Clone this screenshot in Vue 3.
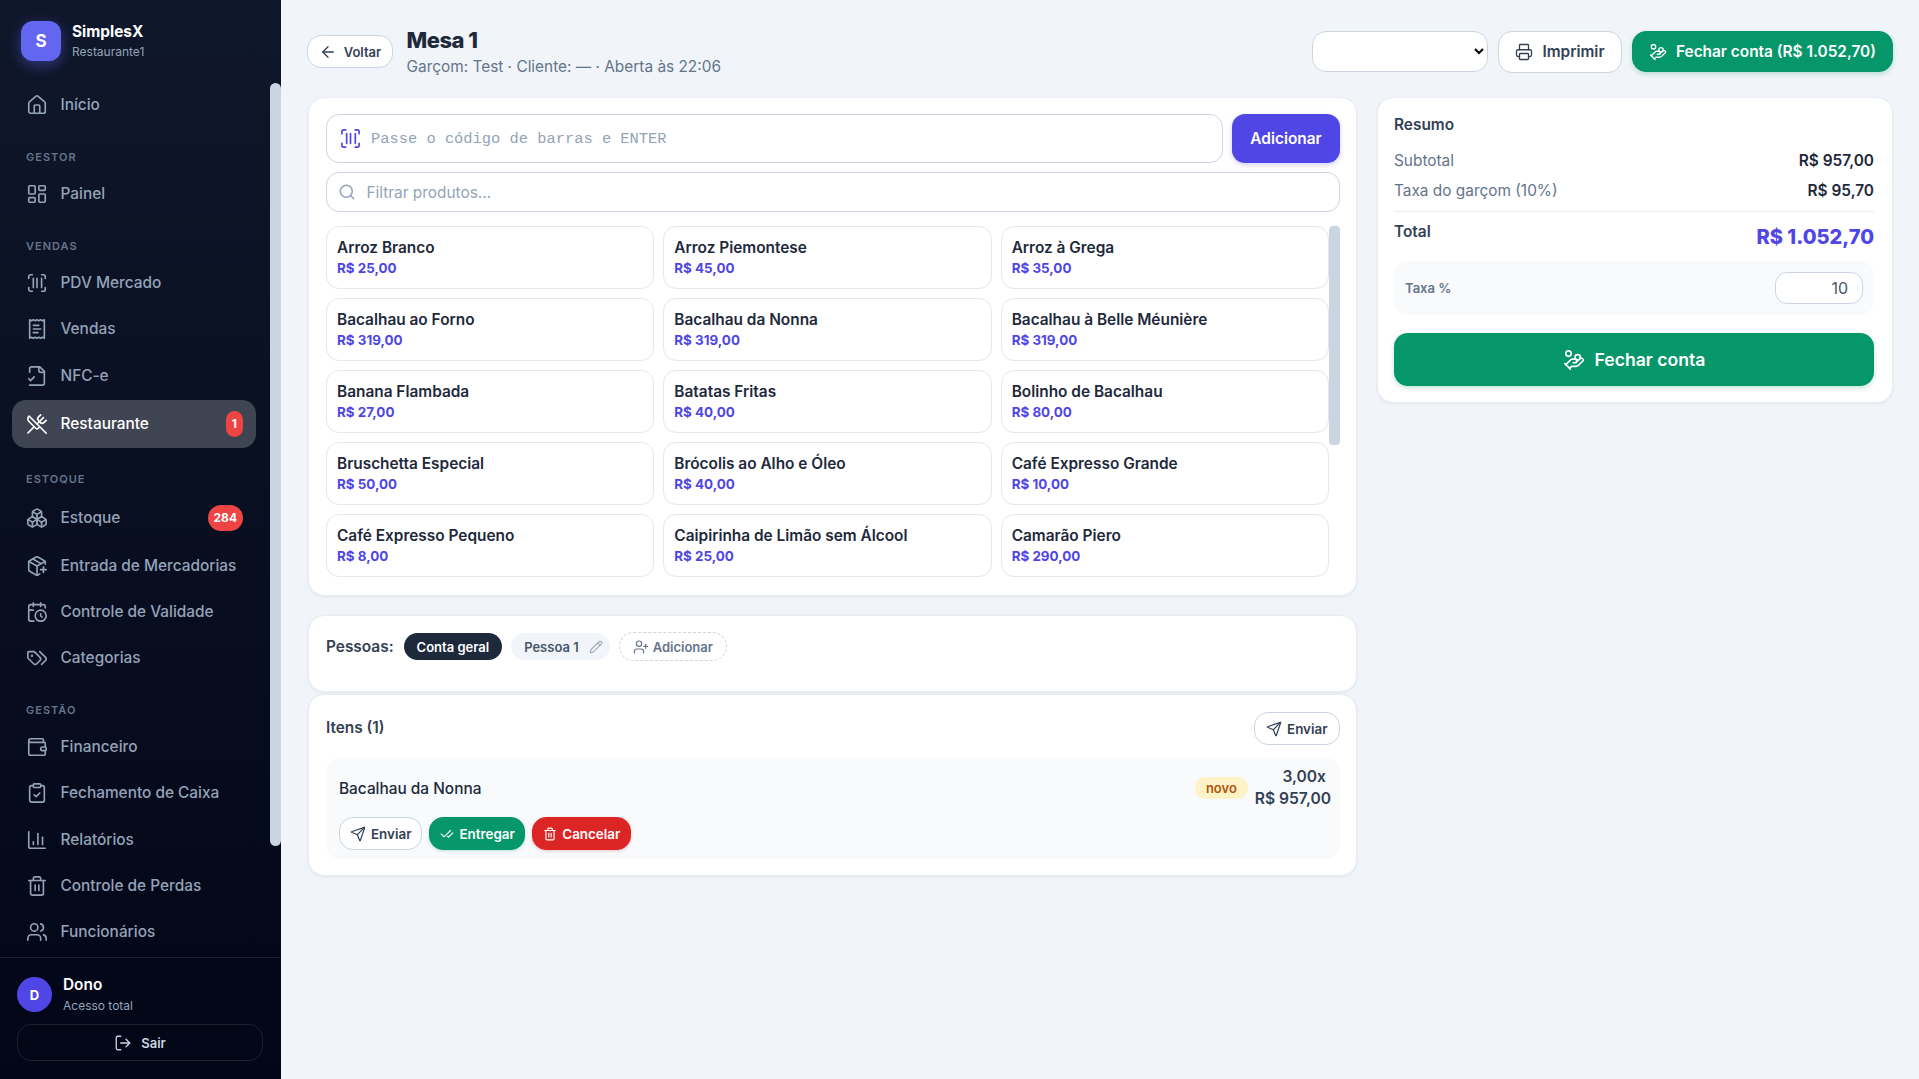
<script setup>
// ícones (traços estilo lucide)
const icons = {
  home: '<path d="M15 21v-8a1 1 0 0 0-1-1h-4a1 1 0 0 0-1 1v8"/><path d="M3 10a2 2 0 0 1 .709-1.528l7-5.999a2 2 0 0 1 2.582 0l7 5.999A2 2 0 0 1 21 10v9a2 2 0 0 1-2 2H5a2 2 0 0 1-2-2z"/>',
  dashboard: '<rect x="3" y="3" width="7" height="9" rx="1"/><rect x="14" y="3" width="7" height="5" rx="1"/><rect x="14" y="12" width="7" height="9" rx="1"/><rect x="3" y="16" width="7" height="5" rx="1"/>',
  barcode: '<path d="M3 7V5a2 2 0 0 1 2-2h2"/><path d="M17 3h2a2 2 0 0 1 2 2v2"/><path d="M21 17v2a2 2 0 0 1-2 2h-2"/><path d="M7 21H5a2 2 0 0 1-2-2v-2"/><path d="M8 7v10"/><path d="M12 7v10"/><path d="M17 7v10"/>',
  receipt: '<path d="M4 2v20l2-1 2 1 2-1 2 1 2-1 2 1 2-1 2 1V2l-2 1-2-1-2 1-2-1-2 1-2-1-2 1Z"/><path d="M14 8H8"/><path d="M16 12H8"/><path d="M13 16H8"/>',
  fileCheck: '<path d="M4 22h14a2 2 0 0 0 2-2V7l-5-5H6a2 2 0 0 0-2 2v4"/><path d="M14 2v4a2 2 0 0 0 2 2h4"/><path d="m3 15 2 2 4-4"/>',
  utensils: '<path d="m16 2-2.3 2.3a3 3 0 0 0 0 4.2l1.8 1.8a3 3 0 0 0 4.2 0L22 8"/><path d="M15 15 3.3 3.3a4.2 4.2 0 0 0 0 6l7.3 7.3c.7.7 2 .7 2.8 0L15 15Zm0 0 7 7"/><path d="m2.1 21.8 6.4-6.3"/><path d="m19 5-7 7"/>',
  boxes: '<path d="M2.97 12.92A2 2 0 0 0 2 14.63v3.24a2 2 0 0 0 .97 1.71l3 1.8a2 2 0 0 0 2.06 0L12 19v-5.5l-5-3-4.03 2.42Z"/><path d="m7 16.5-4.74-2.85"/><path d="m7 16.5 5-3"/><path d="M7 16.5v5.17"/><path d="M12 13.5V19l3.97 2.38a2 2 0 0 0 2.06 0l3-1.8a2 2 0 0 0 .97-1.71v-3.24a2 2 0 0 0-.97-1.71L17 10.5l-5 3Z"/><path d="m17 16.5-5-3"/><path d="m17 16.5 4.74-2.85"/><path d="M17 16.5v5.17"/><path d="M7.97 4.42A2 2 0 0 0 7 6.13v4.37l5 3 5-3V6.13a2 2 0 0 0-.97-1.71l-3-1.8a2 2 0 0 0-2.06 0l-3 1.8Z"/><path d="M12 8 7.26 5.15"/><path d="m12 8 4.74-2.85"/><path d="M12 13.5V8"/>',
  packagePlus: '<path d="M16 16h6"/><path d="M19 13v6"/><path d="M21 10V8a2 2 0 0 0-1-1.73l-7-4a2 2 0 0 0-2 0l-7 4A2 2 0 0 0 3 8v8a2 2 0 0 0 1 1.73l7 4a2 2 0 0 0 2 0l2-1.14"/><path d="m7.5 4.27 9 5.15"/><polyline points="3.29 7 12 12 20.71 7"/><line x1="12" x2="12" y1="22" y2="12"/>',
  calendarClock: '<path d="M21 7.5V6a2 2 0 0 0-2-2H5a2 2 0 0 0-2 2v14a2 2 0 0 0 2 2h3.5"/><path d="M16 2v4"/><path d="M8 2v4"/><path d="M3 10h5"/><path d="M17.5 17.5 16 16.3V14"/><circle cx="16" cy="16" r="6"/>',
  tags: '<path d="m15 5 6.3 6.3a2.4 2.4 0 0 1 0 3.4L17 19"/><path d="M9.586 5.586A2 2 0 0 0 8.172 5H3a1 1 0 0 0-1 1v5.172a2 2 0 0 0 .586 1.414L8.29 18.29a2.426 2.426 0 0 0 3.42 0l3.58-3.58a2.426 2.426 0 0 0 0-3.42z"/><circle cx="6.5" cy="9.5" r=".5" fill="currentColor"/>',
  wallet: '<path d="M19 7V4a1 1 0 0 0-1-1H5a2 2 0 0 0 0 4h15a1 1 0 0 1 1 1v4h-3a2 2 0 0 0 0 4h3a1 1 0 0 0 1-1v-2a1 1 0 0 0-1-1"/><path d="M3 5v14a2 2 0 0 0 2 2h15a1 1 0 0 0 1-1v-4"/>',
  clipboard: '<rect width="8" height="4" x="8" y="2" rx="1"/><path d="M16 4h2a2 2 0 0 1 2 2v14a2 2 0 0 1-2 2H6a2 2 0 0 1-2-2V6a2 2 0 0 1 2-2h2"/><path d="m9 14 2 2 4-4"/>',
  chart: '<path d="M3 3v16a2 2 0 0 0 2 2h16"/><path d="M18 17V9"/><path d="M13 17V5"/><path d="M8 17v-3"/>',
  trash: '<path d="M3 6h18"/><path d="M19 6v14c0 1-1 2-2 2H7c-1 0-2-1-2-2V6"/><path d="M8 6V4c0-1 1-2 2-2h4c1 0 2 1 2 2v2"/><line x1="10" x2="10" y1="11" y2="17"/><line x1="14" x2="14" y1="11" y2="17"/>',
  users: '<path d="M16 21v-2a4 4 0 0 0-4-4H6a4 4 0 0 0-4 4v2"/><circle cx="9" cy="7" r="4"/><path d="M22 21v-2a4 4 0 0 0-3-3.87"/><path d="M16 3.13a4 4 0 0 1 0 7.75"/>',
  logout: '<path d="M9 21H5a2 2 0 0 1-2-2V5a2 2 0 0 1 2-2h4"/><polyline points="16 17 21 12 16 7"/><line x1="21" x2="9" y1="12" y2="12"/>',
  arrowLeft: '<path d="m12 19-7-7 7-7"/><path d="M19 12H5"/>',
  printer: '<path d="M6 18H4a2 2 0 0 1-2-2v-5a2 2 0 0 1 2-2h16a2 2 0 0 1 2 2v5a2 2 0 0 1-2 2h-2"/><path d="M6 9V3a1 1 0 0 1 1-1h10a1 1 0 0 1 1 1v6"/><rect x="6" y="14" width="12" height="8" rx="1"/>',
  handCoins: '<path d="M11 15h2a2 2 0 1 0 0-4h-3c-.6 0-1.1.2-1.4.6L3 17"/><path d="m7 21 1.6-1.4c.3-.4.8-.6 1.4-.6h4c1.1 0 2.1-.4 2.8-1.2l4.6-4.4a2 2 0 0 0-2.75-2.91l-4.2 3.9"/><path d="m2 16 6 6"/><circle cx="16" cy="9" r="2.9"/><circle cx="6" cy="5" r="3"/>',
  search: '<path d="m21 21-4.34-4.34"/><circle cx="11" cy="11" r="8"/>',
  send: '<path d="M14.536 21.686a.5.5 0 0 0 .937-.024l6.5-19a.496.496 0 0 0-.635-.635l-19 6.5a.5.5 0 0 0-.024.937l7.93 3.18a2 2 0 0 1 1.112 1.11z"/><path d="m21.854 2.147-10.94 10.939"/>',
  checkCheck: '<path d="M18 6 7 17l-5-5"/><path d="m22 10-7.5 7.5L13 16"/>',
  userPlus: '<path d="M16 21v-2a4 4 0 0 0-4-4H6a4 4 0 0 0-4 4v2"/><circle cx="9" cy="7" r="4"/><line x1="19" x2="19" y1="8" y2="14"/><line x1="22" x2="16" y1="11" y2="11"/>',
  pencil: '<path d="M21.174 6.812a1 1 0 0 0-3.986-3.987L3.842 16.174a2 2 0 0 0-.5.83l-1.321 4.352a.5.5 0 0 0 .623.622l4.353-1.32a2 2 0 0 0 .83-.497z"/><path d="m15 5 4 4"/>',
};

// menu lateral
const menu = [
  { items: [{ label: 'Início', icon: 'home' }] },
  { title: 'GESTOR', items: [{ label: 'Painel', icon: 'dashboard' }] },
  {
    title: 'VENDAS',
    items: [
      { label: 'PDV Mercado', icon: 'barcode' },
      { label: 'Vendas', icon: 'receipt' },
      { label: 'NFC-e', icon: 'fileCheck' },
      { label: 'Restaurante', icon: 'utensils', badge: '1', active: true },
    ],
  },
  {
    title: 'ESTOQUE',
    items: [
      { label: 'Estoque', icon: 'boxes', badge: '284' },
      { label: 'Entrada de Mercadorias', icon: 'packagePlus' },
      { label: 'Controle de Validade', icon: 'calendarClock' },
      { label: 'Categorias', icon: 'tags' },
    ],
  },
  {
    title: 'GESTÃO',
    items: [
      { label: 'Financeiro', icon: 'wallet' },
      { label: 'Fechamento de Caixa', icon: 'clipboard' },
      { label: 'Relatórios', icon: 'chart' },
      { label: 'Controle de Perdas', icon: 'trash' },
      { label: 'Funcionários', icon: 'users' },
    ],
  },
];

// produtos
const products = [
  ['Arroz Branco', '25,00'], ['Arroz Piemontese', '45,00'], ['Arroz à Grega', '35,00'],
  ['Bacalhau ao Forno', '319,00'], ['Bacalhau da Nonna', '319,00'], ['Bacalhau à Belle Méunière', '319,00'],
  ['Banana Flambada', '27,00'], ['Batatas Fritas', '40,00'], ['Bolinho de Bacalhau', '80,00'],
  ['Bruschetta Especial', '50,00'], ['Brócolis ao Alho e Óleo', '40,00'], ['Café Expresso Grande', '10,00'],
  ['Café Expresso Pequeno', '8,00'], ['Caipirinha de Limão sem Álcool', '25,00'], ['Camarão Piero', '290,00'],
];
</script>

<template>
  <div class="app">
    <aside class="sidebar">
      <div class="brand">
        <div class="logo">S</div>
        <div>
          <div class="brand-name">SimplesX</div>
          <div class="brand-sub">Restaurante1</div>
        </div>
      </div>

      <nav class="nav">
        <div v-for="(section, i) in menu" :key="i" class="nav-section">
          <div v-if="section.title" class="nav-title">{{ section.title }}</div>
          <a v-for="item in section.items" :key="item.label" class="nav-item" :class="{ active: item.active }">
            <svg class="nav-ic" viewBox="0 0 24 24" v-html="icons[item.icon]"></svg>
            <span class="nav-label">{{ item.label }}</span>
            <span v-if="item.badge" class="nav-badge">{{ item.badge }}</span>
          </a>
        </div>
        <div class="nav-thumb"></div>
      </nav>

      <div class="side-foot">
        <div class="user">
          <div class="avatar">D</div>
          <div>
            <div class="user-name">Dono</div>
            <div class="user-sub">Acesso total</div>
          </div>
        </div>
        <button class="logout">
          <svg class="ic18" viewBox="0 0 24 24" v-html="icons.logout"></svg>
          Sair
        </button>
      </div>
    </aside>

    <main class="main">
      <header class="top">
        <button class="btn btn-back">
          <svg class="ic18" viewBox="0 0 24 24" v-html="icons.arrowLeft"></svg>
          Voltar
        </button>
        <div class="top-title">
          <h1>Mesa 1</h1>
          <p>Garçom: Test · Cliente: — · Aberta às 22:06</p>
        </div>
        <div class="top-actions">
          <select class="printer-select"><option></option></select>
          <button class="btn btn-print">
            <svg class="ic18" viewBox="0 0 24 24" v-html="icons.printer"></svg>
            Imprimir
          </button>
          <button class="btn btn-close-top">
            <svg class="ic18" viewBox="0 0 24 24" v-html="icons.handCoins"></svg>
            Fechar conta (R$ 1.052,70)
          </button>
        </div>
      </header>

      <div class="columns">
        <div class="left">
          <section class="card card-products">
            <div class="scan-row">
              <div class="scan-box">
                <svg class="scan-ic" viewBox="0 0 24 24" v-html="icons.barcode"></svg>
                <input class="scan-input" placeholder="Passe o código de barras e ENTER" />
              </div>
              <button class="btn-add">Adicionar</button>
            </div>
            <div class="filter-box">
              <svg class="filter-ic" viewBox="0 0 24 24" v-html="icons.search"></svg>
              <input class="filter-input" placeholder="Filtrar produtos..." />
            </div>
            <div class="product-list">
              <div v-for="p in products" :key="p[0]" class="product">
                <div class="product-name">{{ p[0] }}</div>
                <div class="product-price">R$ {{ p[1] }}</div>
              </div>
              <div class="list-thumb"></div>
            </div>
          </section>

          <section class="card card-people">
            <span class="people-label">Pessoas:</span>
            <span class="chip chip-dark">Conta geral</span>
            <span class="chip chip-light">
              Pessoa 1
              <svg class="ic14" viewBox="0 0 24 24" v-html="icons.pencil"></svg>
            </span>
            <span class="chip chip-dashed">
              <svg class="ic16" viewBox="0 0 24 24" v-html="icons.userPlus"></svg>
              Adicionar
            </span>
          </section>

          <section class="card card-items">
            <div class="items-head">
              <span class="items-title">Itens (1)</span>
              <button class="btn btn-small">
                <svg class="ic16" viewBox="0 0 24 24" v-html="icons.send"></svg>
                Enviar
              </button>
            </div>
            <div class="item">
              <div class="item-top">
                <span class="item-name">Bacalhau da Nonna</span>
                <span class="tag-new">novo</span>
                <div class="item-values">
                  <div class="item-qty">3,00x</div>
                  <div>R$ 957,00</div>
                </div>
              </div>
              <div class="item-actions">
                <button class="btn btn-small">
                  <svg class="ic16" viewBox="0 0 24 24" v-html="icons.send"></svg>
                  Enviar
                </button>
                <button class="btn btn-small btn-green">
                  <svg class="ic14" viewBox="0 0 24 24" v-html="icons.checkCheck"></svg>
                  Entregar
                </button>
                <button class="btn btn-small btn-red">
                  <svg class="ic14" viewBox="0 0 24 24" v-html="icons.trash"></svg>
                  Cancelar
                </button>
              </div>
            </div>
          </section>
        </div>

        <aside class="card summary">
          <div class="sum-title">Resumo</div>
          <div class="sum-row"><span>Subtotal</span><b>R$ 957,00</b></div>
          <div class="sum-row"><span>Taxa do garçom (10%)</span><b>R$ 95,70</b></div>
          <div class="sum-total">
            <span>Total</span>
            <strong>R$ 1.052,70</strong>
          </div>
          <div class="fee-box">
            <span>Taxa %</span>
            <input class="fee-input" value="10" />
          </div>
          <button class="btn-close">
            <svg class="ic22" viewBox="0 0 24 24" v-html="icons.handCoins"></svg>
            Fechar conta
          </button>
        </aside>
      </div>
    </main>
  </div>
</template>

<style>
html, body { margin: 0; background: #f1f5f9; }
</style>

<style scoped>
.app {
  display: flex;
  height: 100vh;
  overflow: hidden;
  font-family: Inter, "Noto Sans", sans-serif;
  color: #1e293b;
}
svg {
  fill: none;
  stroke: currentColor;
  stroke-width: 2;
  stroke-linecap: round;
  stroke-linejoin: round;
  flex-shrink: 0;
}
button { font-family: inherit; cursor: pointer; }

/* sidebar */
.sidebar {
  width: 281px;
  flex-shrink: 0;
  display: flex;
  flex-direction: column;
  background: linear-gradient(180deg, #0f172a 0%, #020617 100%);
}
.brand {
  height: 83px;
  box-sizing: border-box;
  flex-shrink: 0;
  display: flex;
  align-items: flex-start;
  gap: 11px;
  padding: 21px 0 0 21px;
}
.logo {
  width: 40px;
  height: 40px;
  border-radius: 12px;
  background: #6366f1;
  color: #fff;
  font-weight: 700;
  font-size: 17px;
  display: flex;
  align-items: center;
  justify-content: center;
  box-shadow: 0 4px 14px rgba(99, 102, 241, .45);
}
.brand-name { color: #fff; font-size: 15.4px; font-weight: 700; line-height: 20px; margin-top: 1px; }
.brand-sub { color: #94a3b8; font-size: 12px; line-height: 16px; margin-top: 2px; }
.nav {
  position: relative;
  flex: 1;
  min-height: 0;
  padding: 0 25px 0 12px;
}
.nav-thumb {
  position: absolute;
  top: 0;
  right: 0;
  width: 11px;
  height: 763px;
  background: #cbd5e1;
  border-radius: 6px;
}
.nav-title {
  font-size: 11px;
  font-weight: 600;
  letter-spacing: 1px;
  line-height: 14px;
  color: #64748b;
  padding: 21px 0 8px 14px;
}
.nav-item {
  display: flex;
  align-items: center;
  gap: 13px;
  min-height: 22px;
  padding: 11px 13px 11px 13.5px;
  margin-bottom: 2.15px;
  border-radius: 14px;
  color: #94a3b8;
  font-size: 15.4px;
  font-weight: 500;
  line-height: 22px;
}
.nav-item.active {
  background: rgba(255, 255, 255, .22);
  color: #fff;
  margin-bottom: 3px;
}
.nav-ic { width: 22px; height: 22px; stroke-width: 1.8; }
.nav-label { flex: 1; white-space: nowrap; }
.nav-badge {
  background: #ef4444;
  color: #fff;
  font-size: 12px;
  font-weight: 700;
  line-height: 16px;
  padding: 5px 6px;
  border-radius: 999px;
}
.side-foot {
  flex-shrink: 0;
  border-top: 1px solid rgba(255, 255, 255, .1);
  padding: 17px 18px 18px 17px;
}
.user { display: flex; align-items: center; gap: 11px; }
.avatar {
  width: 35px;
  height: 35px;
  border-radius: 50%;
  background: #4f46e5;
  color: #fff;
  font-size: 13px;
  font-weight: 700;
  display: flex;
  align-items: center;
  justify-content: center;
}
.user-name { color: #fff; font-size: 15.4px; font-weight: 600; line-height: 20px; }
.user-sub { color: #94a3b8; font-size: 12px; line-height: 16px; margin-top: 3px; }
.logout {
  width: 100%;
  height: 37px;
  margin-top: 10px;
  background: transparent;
  border: 1px solid rgba(255, 255, 255, .1);
  border-radius: 14px;
  color: #cbd5e1;
  font-size: 13px;
  font-weight: 600;
  display: flex;
  align-items: center;
  justify-content: center;
  gap: 9px;
}

/* conteúdo */
.main {
  flex: 1;
  min-width: 0;
  padding: 26px 26px 0 26.5px;
  background: #f1f5f9;
}
.top { display: flex; align-items: center; height: 51px; margin-bottom: 20px; }
.btn {
  display: inline-flex;
  align-items: center;
  justify-content: center;
  background: #fff;
  border: 1.5px solid #cbd5e1;
  border-radius: 14px;
  color: #334155;
  font-weight: 600;
  box-sizing: border-box;
}
.btn-back { width: 86px; height: 33px; gap: 7px; font-size: 13px; margin-left: -.5px; }
.top-title { margin-left: 13.5px; }
.top-title h1 { margin: 0; font-size: 22px; font-weight: 800; letter-spacing: -.5px; line-height: 28px; color: #1e293b; }
.top-title p { margin: 2px 0 0; font-size: 15.4px; line-height: 22px; color: #64748b; }
.top-actions { margin-left: auto; display: flex; align-items: center; gap: 10px; }
.printer-select {
  width: 176px;
  height: 41px;
  background: #fff;
  border: 1.5px solid #cbd5e1;
  border-radius: 14px;
  box-sizing: border-box;
}
.btn-print { width: 124px; height: 42px; gap: 9px; font-size: 15.4px; }
.btn-close-top {
  width: 261px;
  height: 41px;
  gap: 9px;
  font-size: 15.4px;
  background: #059669;
  border-color: #059669;
  color: #fff;
  box-shadow: 0 2px 5px rgba(5, 150, 105, .25);
}

.columns { display: grid; grid-template-columns: minmax(0, 1fr) 516px; gap: 20px; align-items: start; }
.left { display: flex; flex-direction: column; }
.card {
  background: #fff;
  border: 1px solid #e8edf4;
  border-radius: 16px;
  box-shadow: 0 1px 3px rgba(15, 23, 42, .07);
  box-sizing: border-box;
}

/* produtos */
.card-products { height: 499px; padding: 16px 16px 0 17.5px; }
.scan-row { display: flex; gap: 9px; }
.scan-box {
  flex: 1;
  height: 49px;
  box-sizing: border-box;
  display: flex;
  align-items: center;
  gap: 9.5px;
  padding: 1px 13px 0 11.5px;
  border: 1.5px solid #cbd5e1;
  border-radius: 13px;
}
.scan-ic { width: 23px; height: 23px; color: #4f46e5; stroke-width: 1.75; margin-top: -1px; }
.scan-input, .filter-input {
  flex: 1;
  border: 0;
  outline: 0;
  background: transparent;
  padding: 0;
  color: #1e293b;
}
.scan-input { font-family: "Liberation Mono", monospace; font-size: 15.4px; }
.filter-input { font-family: inherit; font-size: 15.4px; }
.scan-input::placeholder, .filter-input::placeholder { color: #94a3b8; opacity: 1; }
.btn-add {
  width: 108px;
  height: 49px;
  border: 0;
  border-radius: 13px;
  background: #4f46e5;
  color: #fff;
  font-size: 15.4px;
  font-weight: 600;
  box-shadow: 0 2px 5px rgba(79, 70, 229, .25);
}
.filter-box {
  height: 40px;
  box-sizing: border-box;
  margin-top: 9px;
  display: flex;
  align-items: center;
  gap: 10.5px;
  padding: 0 13px 0 11px;
  border: 1.5px solid #cbd5e1;
  border-radius: 13px;
}
.filter-ic { width: 18px; height: 18px; color: #94a3b8; }
.product-list {
  position: relative;
  box-sizing: border-box;
  margin-top: 14px;
  height: 352px;
  padding-right: 11px;
  display: grid;
  grid-template-columns: repeat(3, minmax(0, 1fr));
  grid-auto-rows: 63px;
  gap: 9px;
}
.list-thumb {
  position: absolute;
  top: 0;
  right: 0;
  width: 11px;
  height: 219px;
  background: #cbd5e1;
  border-radius: 4px;
}
.product {
  box-sizing: border-box;
  border: 1.5px solid #e2e8f0;
  border-radius: 13px;
  padding: 11px 10px 0;
}
.product-name { font-size: 15.4px; font-weight: 600; line-height: 20px; color: #1e293b; white-space: nowrap; }
.product-price { font-size: 13.4px; font-weight: 700; line-height: 18px; margin-top: 1px; color: #4f46e5; }

/* pessoas */
.card-people {
  margin-top: 19px;
  height: 77px;
  padding: 17px 17px 0 17.5px;
  display: flex;
  align-items: flex-start;
  gap: 9px;
}
.people-label { font-size: 15.4px; font-weight: 600; color: #334155; line-height: 27px; margin-right: 1px; }
.chip {
  display: inline-flex;
  align-items: center;
  height: 27px;
  box-sizing: border-box;
  border-radius: 999px;
  font-size: 13px;
  font-weight: 600;
}
.chip-dark { background: #1e293b; color: #fff; padding: 0 13px; }
.chip-light { background: #f1f5f9; color: #475569; padding: 0 7px 0 13px; gap: 10px; }
.chip-light svg { color: #94a3b8; stroke-width: 1.75; }
.chip-dashed {
  height: 29px;
  margin-top: -1px;
  padding: 0 13px;
  gap: 4px;
  color: #64748b;
  border: 1.2px dashed #cbd5e1;
}

/* itens */
.card-items { margin-top: 2px; height: 182px; padding: 17px 16px 0 17.5px; }
.items-head { display: flex; align-items: center; justify-content: space-between; }
.items-title { font-size: 15.4px; font-weight: 600; color: #334155; position: relative; top: -1px; }
.btn-small { height: 33px; padding: 0 11.5px; gap: 5px; font-size: 13.4px; }
.item {
  margin-top: 13px;
  height: 101px;
  box-sizing: border-box;
  padding: 9px 9px 0 13px;
  background: #f8fafc;
  border-radius: 14px;
}
.item-top { display: flex; align-items: flex-start; height: 50px; }
.item-name { flex: 1; font-size: 15.4px; font-weight: 500; line-height: 44px; color: #1e293b; }
.tag-new {
  margin-top: 10px;
  margin-right: 7px;
  height: 22px;
  padding: 0 11px;
  border-radius: 999px;
  background: #fef3c7;
  color: #b45309;
  font-size: 13px;
  font-weight: 600;
  line-height: 22px;
}
.item-values { margin-top: -1px; text-align: right; font-size: 15.6px; font-weight: 600; line-height: 22px; color: #334155; }
.item-qty { padding-right: 5px; }
.item-actions { display: flex; gap: 7px; }
.item-actions .btn-small { padding: 0 9.5px; gap: 5.5px; }
.item-actions .btn-small:first-child { padding: 0 10px; gap: 5px; }
.btn-green {
  background: #059669;
  border-color: #059669;
  color: #fff;
  box-shadow: 0 1px 3px rgba(5, 150, 105, .25);
}
.btn-red {
  background: #dc2626;
  border-color: #dc2626;
  color: #fff;
  box-shadow: 0 1px 3px rgba(220, 38, 38, .25);
}

/* resumo */
.summary { height: 306px; padding: 16px 18px 0 16px; }
.sum-title { font-size: 15.4px; font-weight: 600; line-height: 22px; color: #334155; margin-bottom: 10px; }
.sum-row {
  display: flex;
  justify-content: space-between;
  align-items: center;
  height: 29.5px;
  font-size: 15.4px;
  color: #64748b;
}
.sum-row b { font-weight: 600; color: #1e293b; }
.sum-total {
  margin-top: 6px;
  padding-top: 10px;
  height: 50px;
  box-sizing: border-box;
  border-top: 1px solid #e8edf4;
  display: flex;
  justify-content: space-between;
  align-items: flex-start;
  font-size: 15.4px;
  font-weight: 600;
  color: #334155;
}
.sum-total strong { font-size: 20px; font-weight: 800; line-height: 30px; color: #4f46e5; }
.fee-box {
  height: 54px;
  box-sizing: border-box;
  padding: 0 11px 0 11px;
  background: #f8fafc;
  border-radius: 14px;
  display: flex;
  align-items: center;
  justify-content: space-between;
  font-size: 13px;
  font-weight: 600;
  color: #64748b;
}
.fee-input {
  width: 88px;
  height: 32px;
  box-sizing: border-box;
  border: 1.5px solid #cbd5e1;
  border-radius: 12px;
  padding: 0 14px;
  outline: 0;
  background: #fff;
  font-family: inherit;
  font-size: 16px;
  text-align: right;
  color: #475569;
}
.btn-close {
  width: 100%;
  height: 53px;
  margin-top: 18px;
  border: 0;
  border-radius: 14px;
  background: #059669;
  color: #fff;
  font-size: 17.6px;
  font-weight: 600;
  display: flex;
  align-items: center;
  justify-content: center;
  gap: 10px;
  box-shadow: 0 2px 5px rgba(5, 150, 105, .25);
}

.ic14 { width: 14px; height: 14px; }
.ic16 { width: 16px; height: 16px; stroke-width: 1.75; }
.ic18 { width: 18px; height: 18px; stroke-width: 1.75; }
.ic22 { width: 22px; height: 22px; stroke-width: 1.75; }
</style>
